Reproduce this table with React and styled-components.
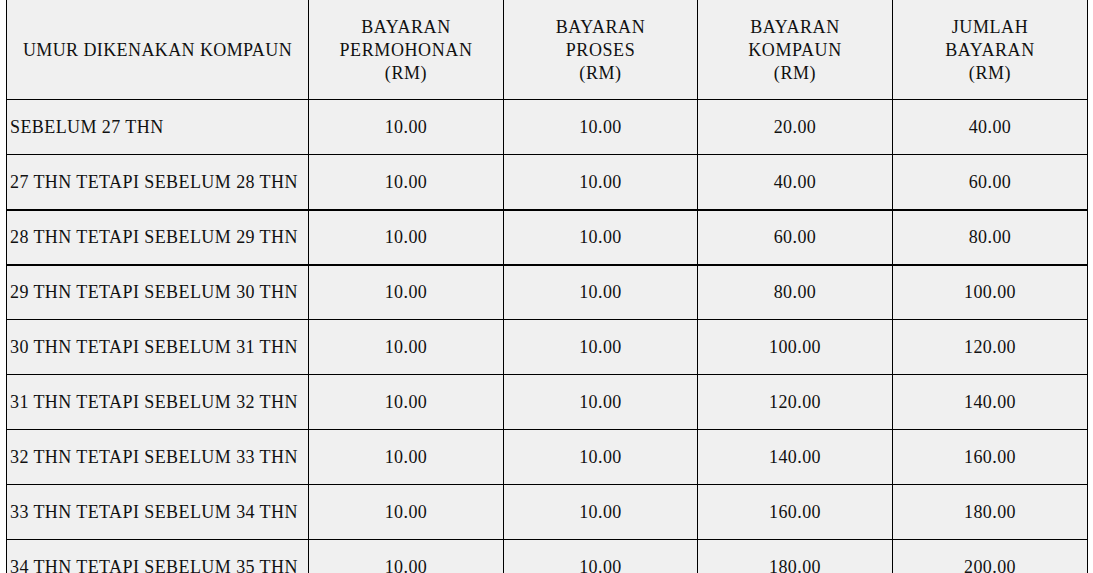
import React from 'react';
import styled, { createGlobalStyle } from 'styled-components';

const ROWS = [
  ['SEBELUM 27 THN', '10.00', '10.00', '20.00', '40.00'],
  ['27 THN TETAPI SEBELUM 28 THN', '10.00', '10.00', '40.00', '60.00'],
  ['28 THN TETAPI SEBELUM 29 THN', '10.00', '10.00', '60.00', '80.00'],
  ['29 THN TETAPI SEBELUM 30 THN', '10.00', '10.00', '80.00', '100.00'],
  ['30 THN TETAPI SEBELUM 31 THN', '10.00', '10.00', '100.00', '120.00'],
  ['31 THN TETAPI SEBELUM 32 THN', '10.00', '10.00', '120.00', '140.00'],
  ['32 THN TETAPI SEBELUM 33 THN', '10.00', '10.00', '140.00', '160.00'],
  ['33 THN TETAPI SEBELUM 34 THN', '10.00', '10.00', '160.00', '180.00'],
  ['34 THN TETAPI SEBELUM 35 THN', '10.00', '10.00', '180.00', '200.00'],
];

const HEADERS = [
  ['BAYARAN', 'PERMOHONAN', '(RM)'],
  ['BAYARAN', 'PROSES', '(RM)'],
  ['BAYARAN', 'KOMPAUN', '(RM)'],
  ['JUMLAH', 'BAYARAN', '(RM)'],
];

// garis tebal di bawah baris ke-2 dan ke-3
const THICK_ROWS = [1, 2];

const GlobalStyle = createGlobalStyle`
  html, body {
    margin: 0;
    padding: 0;
    background: #ffffff;
    overflow: hidden;
  }
`;

const Page = styled.div`
  padding: 0 0 0 6px;
  margin-top: -1px;
`;

const Table = styled.table`
  width: 1081px;
  table-layout: fixed;
  border-collapse: collapse;
  font-family: 'Liberation Serif', 'Times New Roman', serif;
  font-size: 18px;
  color: #111;
  background: #f0f0f0;

  th { box-sizing: border-box; }
  th:nth-child(1) { width: 302px; }
  th:nth-child(2) { width: 195px; }
  th:nth-child(3) { width: 194px; }
  th:nth-child(4) { width: 195px; }
  th:nth-child(5) { width: 195px; }
`;

const HeadRow = styled.tr`
  height: 100px;
`;

const Row = styled.tr`
  height: 55px;
  border-bottom: ${({ $thick }) => ($thick ? '2px' : '1px')} solid #000;
`;

const HeadCell = styled.th`
  border: 1px solid #000;
  font-weight: normal;
  line-height: 23px;
  text-align: center;
  vertical-align: middle;
  padding: 2px 0 0;
  letter-spacing: ${({ $tight }) => ($tight ? '0.4px' : '0.6px')};
  white-space: nowrap;
`;

const HeadLine = styled.div`
  display: block;
`;

const Cell = styled.td`
  border-left: 1px solid #000;
  border-right: 1px solid #000;
  padding: 0 ${({ $left }) => ($left ? '3px' : '0')};
  text-align: ${({ $left }) => ($left ? 'left' : 'center')};
  vertical-align: middle;
  white-space: nowrap;
  line-height: 22px;
  letter-spacing: 0.42px;
`;

const App = () => (
  <Page>
    <GlobalStyle />
    <Table>
      <thead>
        <HeadRow>
          <HeadCell $tight>UMUR DIKENAKAN KOMPAUN</HeadCell>
          {HEADERS.map((lines, i) => (
            <HeadCell key={i}>
              {lines.map((l) => (
                <HeadLine key={l}>{l}</HeadLine>
              ))}
            </HeadCell>
          ))}
        </HeadRow>
      </thead>
      <tbody>
        {ROWS.map((row, i) => (
          <Row key={row[0]} $thick={THICK_ROWS.includes(i)}>
            {row.map((v, j) => (
              <Cell key={j} $left={j === 0}>
                {v}
              </Cell>
            ))}
          </Row>
        ))}
      </tbody>
    </Table>
  </Page>
);

export default App;
